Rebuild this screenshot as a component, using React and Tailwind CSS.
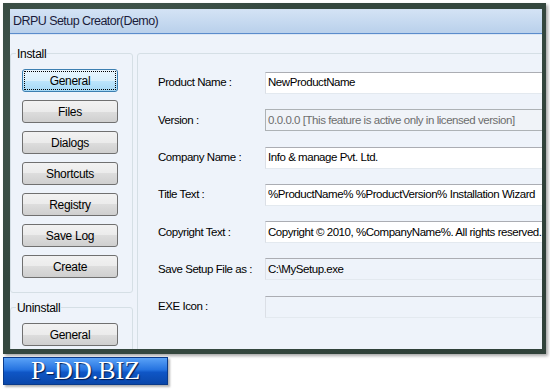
const installButtons = ["General", "Files", "Dialogs", "Shortcuts", "Registry", "Save Log", "Create"];

const fields = [
  { label: "Product Name :", value: "NewProductName", kind: "edit" },
  { label: "Version :", value: "0.0.0.0 [This feature is active only in licensed version]", kind: "disabled" },
  { label: "Company Name :", value: "Info & manage Pvt. Ltd.", kind: "edit" },
  { label: "Title Text :", value: "%ProductName% %ProductVersion% Installation Wizard", kind: "edit" },
  { label: "Copyright Text :", value: "Copyright © 2010, %CompanyName%. All rights reserved.", kind: "edit" },
  { label: "Save Setup File as :", value: "C:\\MySetup.exe", kind: "readonly" },
  { label: "EXE Icon :", value: "", kind: "readonly" },
];

function WinButton({ label, active }) {
  if (active) {
    return (
      <div className="w-[96px] h-[23px] flex items-center justify-center rounded-[3px] border border-[#3c7fb1] bg-[linear-gradient(to_bottom,#eaf6fd_0%,#d9f0fc_50%,#bee6fd_50%,#a7d9f5_100%)] outline-1 outline-dotted outline-black outline-offset-[-3px] text-[12px] tracking-[-0.3px] text-black">
        {label}
      </div>
    );
  }
  return (
    <div className="w-[96px] h-[23px] flex items-center justify-center rounded-[3px] border border-[#707070] bg-[linear-gradient(to_bottom,#f2f2f2_0%,#ebebeb_50%,#dddddd_50%,#cfcfcf_100%)] text-[12px] tracking-[-0.3px] text-black">
      {label}
    </div>
  );
}

function GroupBox({ title, height, children }) {
  return (
    <div className={`relative border border-[#d5dfe5] rounded-[3px] ${height} pl-[11px] pt-[15px]`}>
      <span className="absolute top-[-9px] left-[5px] px-[1px] bg-[#eef3fa] text-[12px] tracking-[-0.3px] text-black">
        {title}
      </span>
      <div className="flex flex-col gap-[8px]">{children}</div>
    </div>
  );
}

function Field({ label, value, kind }) {
  const box =
    kind === "edit"
      ? "bg-white border-t-[#abadb3] border-x-[#dbdfe6] border-b-[#e3e9ef] text-black"
      : kind === "disabled"
      ? "bg-[#f0f3f8] border-[#adb2b5] text-[#6d6d6d]"
      : "bg-[#eef3fa] border-t-[#abadb3] border-x-[#dbdfe6] border-b-[#e3e9ef] text-black";
  return (
    <div className="flex items-center h-[22px]">
      <div className="w-[107px] shrink-0 text-[11.5px] tracking-[-0.45px] text-black">{label}</div>
      <div className={`w-[300px] h-[22px] shrink-0 border flex items-center pl-[2px] text-[11.5px] tracking-[-0.45px] whitespace-nowrap ${box}`}>
        {value}
      </div>
    </div>
  );
}

export default function App() {
  return (
    <div className="w-[550px] h-[390px] bg-white overflow-hidden font-['Liberation_Sans',Arial,sans-serif]">
      {/* window frame */}
      <div className="ml-[3px] mt-[3px] w-[543px] h-[351px] pt-[6px] pl-[7px] pr-[4px] pb-[5px] bg-[#34473e] bg-[radial-gradient(circle_at_20%_30%,#4a5f55_0,transparent_40%),radial-gradient(circle_at_80%_70%,#2a3a33_0,transparent_45%)] shadow-[2px_2px_3px_rgba(0,0,0,0.35)]">
        <div className="h-full flex flex-col bg-[#eef3fa] overflow-hidden">
          {/* title bar */}
          <div className="h-[24px] shrink-0 flex items-center pl-[3px] bg-[linear-gradient(to_bottom,#d4e3f5_0%,#c4d8ef_60%,#b9d0eb_100%)] text-[12.5px] tracking-[-0.55px] text-[#1b1b3a]">
            DRPU Setup Creator(Demo)
          </div>
          <div className="h-px shrink-0 bg-[#5b8ccc]" />
          <div className="h-px shrink-0 bg-[#dce7f5]" />

          {/* body */}
          <div className="flex-1 flex gap-[4px] pt-[18px]">
            <div className="w-[123px] shrink-0 flex flex-col gap-[14px]">
              <GroupBox title="Install" height="h-[240px]">
                {installButtons.map((b, i) => (
                  <WinButton key={b} label={b} active={i === 0} />
                ))}
              </GroupBox>
              <GroupBox title="Uninstall" height="h-[80px]">
                <WinButton label="General" />
              </GroupBox>
            </div>

            <div className="w-[420px] shrink-0 h-[330px] border border-[#d5dfe5] rounded-tl-[3px] pl-[20px] pt-[18px]">
              <div className="flex flex-col gap-[15.3px]">
                {fields.map((f) => (
                  <Field key={f.label} {...f} />
                ))}
              </div>
            </div>
          </div>
        </div>
      </div>

      {/* watermark badge */}
      <div className="ml-[3px] mt-[3px] w-[165px] h-[28px] flex items-center pl-[27px] border border-[#0a3a8a] bg-[linear-gradient(to_bottom,#5aa2f7_0%,#2573e0_45%,#0f56c6_55%,#0a47aa_100%)] shadow-[2px_2px_2px_rgba(0,0,0,0.3)]">
        <span className="font-['Liberation_Serif',serif] text-[26px] leading-none text-white [text-shadow:1px_1px_1px_#00184a]">
          P-DD.BIZ
        </span>
      </div>
    </div>
  );
}
